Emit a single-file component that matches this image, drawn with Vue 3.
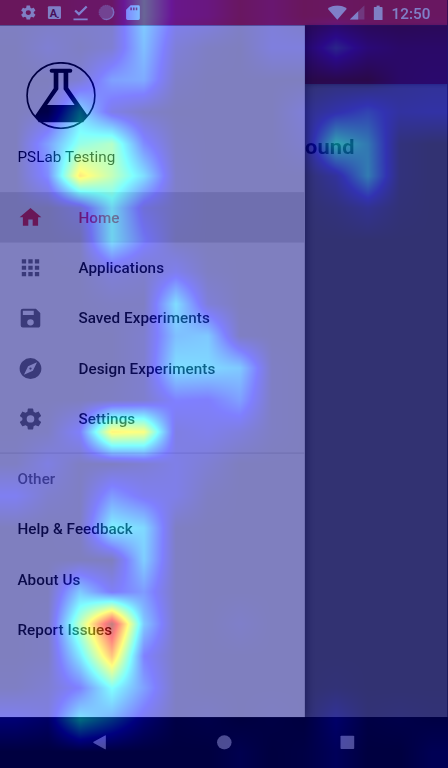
<script setup>
import { onMounted, ref } from 'vue'

const menu = [
  { label: 'Home', active: true, path: 'M10 20v-6h4v6h5v-8h3L12 3 2 12h3v8z' },
  { label: 'Applications', path: 'M4 8h4V4H4v4zm6 12h4v-4h-4v4zm-6 0h4v-4H4v4zm0-6h4v-4H4v4zm6 0h4v-4h-4v4zm6-10v4h4V4h-4zm-6 4h4V4h-4v4zm6 6h4v-4h-4v4zm0 6h4v-4h-4v4z' },
  { label: 'Saved Experiments', path: 'M17 3H5a2 2 0 0 0-2 2v14a2 2 0 0 0 2 2h14c1.100 0 2-.9 2-2V7l-4-4zm-5 16a3 3 0 1 1 0-6 3 3 0 0 1 0 6zm3-10H5V5h10v4z' },
  { label: 'Design Experiments', path: 'M12 10.900a1.100 1.100 0 1 0 0 2.200 1.100 1.100 0 0 0 0-2.200zM12 2a10 10 0 1 0 0 20 10 10 0 0 0 0-20zm2.190 12.190L6 18l3.810-8.190L18 6l-3.810 8.190z' },
  { label: 'Settings', path: 'M19.430 12.980c.04-.32.07-.64.07-.98s-.03-.66-.07-.98l2.110-1.650c.19-.15.24-.42.12-.64l-2-3.460c-.12-.22-.39-.3-.61-.22l-2.490 1c-.52-.4-1.080-.73-1.690-.98l-.38-2.650A.488.488 0 0 0 14 2h-4c-.25 0-.46.18-.49.42l-.38 2.650c-.61.25-1.170.59-1.690.98l-2.490-1c-.23-.09-.49 0-.61.22l-2 3.460c-.13.22-.07.49.12.64l2.110 1.650c-.04.32-.07.65-.07.98s.03.66.07.98l-2.110 1.650c-.19.15-.24.42-.12.64l2 3.460c.12.22.39.3.61.22l2.490-1c.52.4 1.080.73 1.690.98l.38 2.650c.03.24.24.42.49.42h4c.25 0 .46-.18.49-.42l.38-2.650c.61-.25 1.170-.59 1.690-.98l2.490 1c.23.09.49 0 .61-.22l2-3.460c.12-.22.07-.49-.12-.64l-2.110-1.650zM12 15.500a3.500 3.500 0 1 1 0-7 3.500 3.500 0 0 1 0 7z' }
]
const gear = menu[4].path
const links = ['Help & Feedback', 'About Us', 'Report Issues']

// Attention intensity in percent, one value per 32px cell
const heat = [
  [1, 1, 3, 3, 28, 10, 8, 2, 5, 1, 2, 1, 1, 2],
  [0, 4, 1, 4, 25, 5, 1, 0, 6, 6, 18, 9, 6, 6],
  [0, 0, 4, 19, 21, 2, 0, 0, 0, 0, 1, 0, 6, 7],
  [0, 2, 30, 8, 2, 0, 0, 0, 0, 5, 11, 16, 9, 10],
  [0, 19, 42, 48, 15, 1, 0, 0, 0, 3, 35, 26, 2, 0],
  [0, 15, 67, 51, 31, 2, 0, 0, 0, 0, 8, 27, 2, 0],
  [0, 0, 6, 32, 8, 2, 0, 0, 0, 0, 2, 6, 1, 0],
  [0, 0, 1, 32, 14, 1, 0, 0, 0, 0, 0, 0, 0, 0],
  [0, 0, 0, 5, 3, 9, 1, 0, 0, 0, 0, 0, 0, 0],
  [0, 0, 0, 1, 1, 31, 5, 0, 0, 0, 0, 0, 0, 0],
  [0, 0, 0, 0, 3, 25, 27, 1, 0, 0, 0, 0, 0, 0],
  [0, 0, 0, 0, 3, 31, 30, 27, 1, 0, 0, 0, 0, 0],
  [0, 0, 0, 1, 3, 13, 12, 19, 1, 0, 0, 0, 0, 0],
  [0, 1, 12, 65, 62, 7, 9, 6, 1, 0, 0, 0, 0, 0],
  [1, 7, 1, 1, 4, 8, 4, 0, 0, 0, 0, 0, 0, 0],
  [10, 3, 1, 18, 10, 8, 1, 0, 0, 0, 0, 0, 0, 0],
  [0, 0, 1, 35, 30, 1, 0, 0, 0, 0, 0, 0, 0, 0],
  [0, 0, 0, 0, 28, 1, 0, 0, 0, 0, 0, 0, 0, 0],
  [0, 0, 27, 11, 18, 1, 0, 0, 0, 0, 0, 0, 0, 0],
  [0, 1, 50, 100, 27, 1, 0, 2, 0, 0, 0, 0, 0, 0],
  [0, 1, 33, 74, 13, 1, 0, 0, 0, 0, 0, 0, 0, 0],
  [1, 4, 13, 38, 19, 1, 0, 0, 0, 0, 1, 0, 0, 0],
  [10, 7, 33, 22, 9, 1, 2, 0, 1, 0, 8, 1, 2, 1],
  [0, 0, 0, 0, 0, 0, 0, 3, 0, 1, 5, 0, 0, 4]
]

const canvas = ref(null)
const ramp = (v, centre) => 255 * Math.max(0, Math.min(1, 1.5 - Math.abs(4 * v - centre)))

onMounted(() => {
  const ctx = canvas.value.getContext('2d')
  const image = ctx.createImageData(448, 768)
  for (let y = 0; y < 768; y++) {
    const gy = Math.max(0, Math.min(23, (y - 15.5) / 32))
    const y0 = Math.floor(gy)
    const y1 = Math.min(23, y0 + 1)
    for (let x = 0; x < 448; x++) {
      const gx = Math.max(0, Math.min(13, (x - 15.5) / 32))
      const x0 = Math.floor(gx)
      const x1 = Math.min(13, x0 + 1)
      const fx = gx - x0
      const top = heat[y0][x0] * (1 - fx) + heat[y0][x1] * fx
      const bottom = heat[y1][x0] * (1 - fx) + heat[y1][x1] * fx
      const v = (top + (bottom - top) * (gy - y0)) / 100
      const i = (y * 448 + x) * 4
      image.data[i] = ramp(v, 3)
      image.data[i + 1] = ramp(v, 2)
      image.data[i + 2] = ramp(v, 1)
      image.data[i + 3] = 255
    }
  }
  ctx.putImageData(image, 0, 0)
})
</script>

<template>
  <div class="viewport">
    <div class="screen">
      <header class="status">
        <svg viewBox="0 0 24 24"><path :d="gear" /></svg>
        <div class="badge-a">A<i></i></div>
        <svg viewBox="0 0 16 16"><path d="M1.500 13.500h13v1.900h-13zM2.300 6.600l1.400-1.400 2.800 2.800 6.400-6.500 1.400 1.400-7.800 8z" /></svg>
        <svg viewBox="0 0 16 16"><circle cx="7.700" cy="7.800" r="6.700" fill-opacity=".42" /><path d="M12.700 3.200a6.800 6.800 0 0 1-8.500 10.400" fill="none" stroke="#fff" stroke-width="1.300" stroke-opacity=".7" /><circle cx="7.700" cy="7.800" r="6.800" fill="none" stroke="#fff" stroke-opacity=".55" stroke-width=".7" stroke-dasharray="1 .7" /></svg>
        <svg viewBox="0 0 16 16"><path fill-rule="evenodd" d="M6 1h7q1.400 0 1.400 1.400v11.200Q14.400 15 13 15H3.200q-1.400 0-1.400-1.400V5.200zM5.700 3.200v2.600h1.400V3.200zm2.500 0v2.600h1.400V3.200zm2.500 0v2.600h1.400V3.200z" /></svg>
        <span class="spacer"></span>
        <svg class="wifi" viewBox="0 0 18 14"><path d="M0 3.200C5-1 13-1 18 3.200L9 14z" /></svg>
        <svg class="signal" viewBox="0 0 14 14"><path d="M14 0v14H0z" fill-opacity=".32" /><path d="M8 6v8H0z" /></svg>
        <svg class="battery" viewBox="0 0 9 15"><path d="M3 0h3v1.600h2q.8 0 .8.800v11.800q0 .8-.8.800H1q-.8 0-.8-.8V2.400q0-.8.8-.8h2z" /></svg>
        <time>12:50</time>
      </header>

      <div class="body">
        <aside class="drawer">
          <div class="account">
            <svg class="logo" viewBox="0 0 64 64">
              <circle cx="32" cy="32" r="31.200" fill="none" stroke="#000" stroke-width="1.600" />
              <path d="M23.500 8.300h17" fill="none" stroke="#000" stroke-width="3.800" stroke-linecap="round" />
              <path fill-rule="evenodd" d="M25.300 8h13.400v16.500L56.400 51l-4 6.400H11.600L8 51.500 25.300 25zM29.600 10v16L19.300 41h25.200L34.400 26V10z" />
            </svg>
            <div class="name">PSLab Testing</div>
          </div>
          <nav class="menu">
            <a v-for="item in menu" :key="item.label" class="item" :class="{ active: item.active }">
              <svg viewBox="0 0 24 24"><path :d="item.path" /></svg>
              <span>{{ item.label }}</span>
            </a>
          </nav>
          <section class="other">
            <div class="item heading">Other</div>
            <a v-for="link in links" :key="link" class="item">{{ link }}</a>
          </section>
        </aside>
        <main class="content">
          <div class="toolbar"></div>
          <div class="headline">ound</div>
        </main>
      </div>

      <footer class="navbar">
        <svg viewBox="0 0 14 14"><path d="M12.200.8v12.400Q12.200 14 11.500 13.600L1 7.600q-.8-.6 0-1.200L11.500.4q.7-.4.7.4z" /></svg>
        <svg viewBox="0 0 14 14"><circle cx="7" cy="7" r="6.700" /></svg>
        <svg viewBox="0 0 14 14"><rect x=".7" y=".7" width="12.600" height="12.600" rx=".8" /></svg>
      </footer>
    </div>
    <canvas ref="canvas" class="heatmap" width="448" height="768"></canvas>
  </div>
</template>

<style>
body {
  margin: 0;
  overflow: hidden;
}
</style>

<style scoped>
.viewport {
  position: relative;
  width: 448px;
  height: 768px;
  overflow: hidden;
  background: #000;
}
.screen {
  display: flex;
  flex-direction: column;
  width: 411.43px;
  height: 731.43px;
  transform: scale(1.0889, 1.05);
  transform-origin: 0 0;
  font: 500 14px Roboto, sans-serif;
  letter-spacing: 0.05px;
  color: #151515;
}
.heatmap {
  position: absolute;
  inset: 0;
  opacity: 0.5;
}
.status {
  box-sizing: border-box;
  height: 24px;
  flex: none;
  display: flex;
  align-items: center;
  gap: 8px;
  padding: 0 16px 0 18px;
  background: #d32f2f;
  color: #fff;
}
.status svg {
  width: 16px;
  height: 16px;
  fill: #fff;
}
.badge-a {
  box-sizing: border-box;
  display: flex;
  justify-content: center;
  width: 12px;
  height: 12.5px;
  margin: 0 2px;
  background: #fff;
  color: #8c2525;
  border-radius: 1px;
  font-size: 10px;
  line-height: 13px;
  font-weight: 700;
}
.badge-a i {
  align-self: flex-end;
  width: 2px;
  height: 1px;
  margin-bottom: 1px;
  background: #8c2525;
}
.spacer {
  flex: 1;
}
.status .wifi {
  width: 17.5px;
  height: 14px;
  margin-right: -5.5px;
}
.status .signal {
  width: 14px;
  height: 13.5px;
}
.status .battery {
  width: 8.5px;
  height: 14.5px;
}
.status time {
  line-height: 24px;
  padding-top: 1px;
}
.body {
  display: flex;
  flex: 1;
  min-height: 0;
}
.drawer {
  position: relative;
  z-index: 1;
  width: 280px;
  flex: none;
  background: #fff;
  box-shadow: 2px 0 8px rgba(0, 0, 0, 0.4);
  clip-path: inset(0 -16px 0 0);
}
.account {
  box-sizing: border-box;
  height: 159px;
  padding: 35px 16px 0;
}
.logo {
  display: block;
  width: 64px;
  height: 64px;
  margin-left: 8px;
}
.name {
  margin-top: 17px;
  line-height: 18px;
  font-weight: 400;
  color: #000;
}
.menu {
  padding-bottom: 8px;
  border-bottom: 1px solid #dedede;
}
.item {
  display: flex;
  align-items: center;
  height: 48px;
  box-sizing: border-box;
  padding: 0 16px;
}
.item svg {
  width: 24px;
  height: 24px;
  margin-right: 32px;
  fill: #757575;
}
.item.active {
  background: #dfdfdf;
  color: #d32f2f;
}
.item.active svg {
  fill: #d32f2f;
}
.heading {
  color: #757575;
}
.content {
  flex: 1;
  background: #656565;
}
.toolbar {
  height: 56px;
  background: #541313;
  box-shadow: 0 1px 4px rgba(0, 0, 0, 0.4);
}
.headline {
  margin-top: 48px;
  font-size: 20px;
  letter-spacing: 0.2px;
  line-height: 24px;
  font-weight: 700;
  color: #080808;
}
.navbar {
  flex: none;
  height: 48px;
  display: flex;
  align-items: center;
  justify-content: center;
  gap: 99.5px;
  background: #000;
}
.navbar svg {
  width: 14px;
  height: 14px;
  fill: #999;
}
</style>
